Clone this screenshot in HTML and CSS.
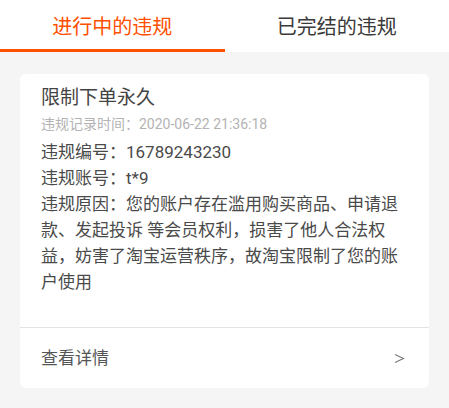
FILE: index.html
```html
<!DOCTYPE html>
<html lang="zh-CN">
<head>
<meta charset="utf-8">
<link rel="stylesheet" href="styles.css">
</head>
<body>
<div class="tabs">
  <div class="tab active">进行中的违规</div>
  <div class="tab">已完结的违规</div>
</div>
<div class="card">
  <div class="card-body">
    <div class="title">限制下单永久</div>
    <div class="time">违规记录时间：2020-06-22 21:36:18</div>
    <div class="info">违规编号：16789243230</div>
    <div class="info">违规账号：t*9</div>
    <div class="info">违规原因：您的账户存在滥用购买商品、申请退款、发起投诉 等会员权利，损害了他人合法权益，妨害了淘宝运营秩序，故淘宝限制了您的账户使用</div>
  </div>
  <div class="card-foot">
    <span class="more">查看详情</span>
    <svg class="arrow" width="11" height="11" viewBox="0 0 11 11"><polyline points="1,1.5 9.5,5.5 1,9.5" fill="none" stroke="#777" stroke-width="1.1"/></svg>
  </div>
</div>
</body>
</html>
```
FILE: styles.css
```css
html, body {
  margin: 0;
  padding: 0;
}
body {
  background: #f5f5f5;
  font-family: Roboto, "Noto Sans CJK SC", sans-serif;
  color: #333;
}
.tabs {
  display: flex;
  height: 52px;
  background: #fff;
}
.tab {
  flex: 1;
  display: flex;
  align-items: center;
  justify-content: center;
  font-size: 20px;
  color: #3a3a3a;
  box-sizing: border-box;
  padding-top: 2px;
  border-bottom: 3px solid transparent;
}
.tab.active {
  color: #ff5000;
  border-bottom-color: #ff5000;
}
.card {
  margin: 22px 20px 0;
  background: #fff;
  border-radius: 6px;
}
.card-body {
  padding: 11px 21px 32px;
  border-bottom: 1px solid #e3e3e3;
}
.title {
  font-size: 19px;
  line-height: 26px;
  color: #444;
}
.time {
  margin-top: 3px;
  font-size: 14px;
  line-height: 20px;
  color: #b3b3b3;
  margin-bottom: 5px;
}
.info {
  font-size: 17px;
  line-height: 26px;
  color: #4a4a4a;
}
.card-foot {
  height: 60px;
  display: flex;
  align-items: center;
  justify-content: space-between;
  padding: 0 24px 0 21px;
}
.more {
  font-size: 17px;
  color: #555;
  margin-top: -3px;
}
.arrow {
  display: block;
}
```
